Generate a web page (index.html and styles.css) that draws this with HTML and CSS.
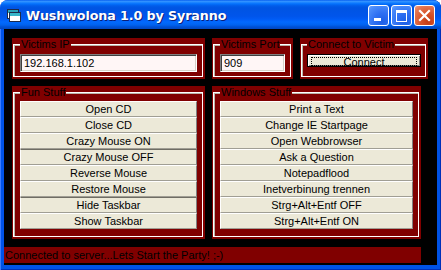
FILE: index.html
```html
<!DOCTYPE html>
<html>
<head>
<meta charset="utf-8">
<link rel="stylesheet" href="styles.css">
</head>
<body>
<div class="window">
  <div class="titlebar">
    <svg class="app-icon" width="14" height="13" viewBox="0 0 14 13">
      <rect x="0.5" y="0.5" width="11" height="9" fill="#fff" stroke="#1d2a4a"/>
      <rect x="1" y="1" width="10" height="3" fill="#2aa3b8"/>
      <rect x="2.5" y="3.5" width="11" height="9" fill="#fff" stroke="#1d2a4a"/>
      <rect x="3" y="4" width="10" height="3" fill="#37b6c9"/>
    </svg>
    <div class="title">Wushwolona 1.0 by Syranno</div>
    <div class="ctrls">
      <div class="cbtn cbtn-min"><span class="min-bar"></span></div>
      <div class="cbtn cbtn-max"><span class="max-box"></span></div>
      <div class="cbtn cbtn-close">
        <svg width="21" height="21" viewBox="0 0 21 21"><path d="M6 6 L15 15 M15 6 L6 15" stroke="#fff" stroke-width="2.2" stroke-linecap="square"/></svg>
      </div>
    </div>
  </div>
  <div class="client">
    <div class="row row-top">
      <div class="panel panel-ip">
        <fieldset class="group">
          <legend>Victims IP</legend>
          <div class="field">192.168.1.102</div>
        </fieldset>
      </div>
      <div class="panel panel-port">
        <fieldset class="group">
          <legend>Victims Port</legend>
          <div class="field">909</div>
        </fieldset>
      </div>
      <div class="panel panel-conn">
        <fieldset class="group group-conn">
          <legend>Connect to Victim</legend>
          <div class="connect"><span class="focus">Connect</span></div>
        </fieldset>
      </div>
    </div>
    <div class="row row-main">
      <div class="panel panel-fun">
        <fieldset class="group">
          <legend>Fun Stuff</legend>
          <div class="btns">
            <div class="btn">Open CD</div>
            <div class="btn">Close CD</div>
            <div class="btn">Crazy Mouse ON</div>
            <div class="btn btn-dark">Crazy Mouse OFF</div>
            <div class="btn">Reverse Mouse</div>
            <div class="btn">Restore Mouse</div>
            <div class="btn btn-dark">Hide Taskbar</div>
            <div class="btn">Show Taskbar</div>
          </div>
        </fieldset>
      </div>
      <div class="panel panel-win">
        <fieldset class="group">
          <legend>Windows Stuff</legend>
          <div class="btns">
            <div class="btn">Print a Text</div>
            <div class="btn">Change IE Startpage</div>
            <div class="btn">Open Webbrowser</div>
            <div class="btn">Ask a Question</div>
            <div class="btn">Notepadflood</div>
            <div class="btn">Inetverbinung trennen</div>
            <div class="btn">Strg+Alt+Entf OFF</div>
            <div class="btn">Strg+Alt+Entf ON</div>
          </div>
        </fieldset>
      </div>
    </div>
    <div class="status">Connected to server...Lets Start the Party! ;-)</div>
  </div>
</div>
</body>
</html>
```
FILE: styles.css
```css
html, body {
  margin: 0;
  padding: 0;
  background: #fff;
}
body {
  font-family: "Liberation Sans", Arial, sans-serif;
  font-size: 11px;
}
.window {
  width: 441px;
  height: 270px;
  background: #0052e6;
  border-radius: 8px 8px 0 0;
  box-shadow: inset 1px 0 0 #3a7bff, inset -1px 0 0 #0030b8, inset 0 -1px 0 #0030b8;
  display: flex;
  flex-direction: column;
  overflow: hidden;
}
.titlebar {
  height: 29px;
  flex: none;
  display: flex;
  align-items: center;
  padding: 0 6px 0 7px;
  border-radius: 8px 8px 0 0;
  background: linear-gradient(#0058ee 0%, #3593ff 4%, #288eff 7%, #127dff 10%, #036ffc 14%, #0262ee 18%, #0057e5 24%, #0054e3 30%, #0055eb 56%, #005bf5 66%, #026afe 76%, #0062ef 86%, #0052d6 92%, #0046c0 100%);
}
.app-icon {
  flex: none;
  margin-top: 1px;
}
.title {
  margin-left: 5px;
  color: #fff;
  font-family: "DejaVu Sans", "Liberation Sans", sans-serif;
  font-weight: bold;
  font-size: 12.7px;
  letter-spacing: -0.1px;
  text-shadow: 1px 1px 0 #0a1e78;
  flex: 1;
  padding-top: 1px;
}
.ctrls {
  display: flex;
  gap: 2px;
  margin-top: 1px;
}
.cbtn {
  width: 19px;
  height: 19px;
  border: 1px solid #fff;
  border-radius: 3px;
  position: relative;
  background: radial-gradient(circle at 70% 80%, #1c5fe6 0%, #2d6ff2 40%, #4a8bfa 80%, #6aa3ff 100%);
}
.cbtn-close {
  background: radial-gradient(circle at 70% 80%, #c43a12 0%, #d8542a 40%, #e67a57 80%, #f0a084 100%);
}
.cbtn-close svg {
  display: block;
  margin: -1px;
}
.min-bar {
  position: absolute;
  left: 5px;
  top: 12px;
  width: 7px;
  height: 3px;
  background: #fff;
}
.max-box {
  position: absolute;
  left: 4px;
  top: 4px;
  width: 9px;
  height: 8px;
  border: 1px solid #fff;
  border-top-width: 3px;
}
.client {
  flex: 1;
  margin: 0 4px 5px 4px;
  background: #000;
  padding: 9px 0 0 8px;
  display: flex;
  flex-direction: column;
}
.row {
  display: flex;
  gap: 7px;
}
.row-top {
  height: 41px;
}
.row-main {
  height: 153px;
  margin-top: 7px;
}
.panel {
  background: #800000;
  display: flex;
  padding: 0 2px 2px 1px;
}
.panel-ip { width: 190px; }
.panel-port { width: 78px; }
.panel-conn { width: 125px; }
.panel-fun { width: 190px; }
.panel-win { width: 206px; }
.group {
  flex: 1;
  margin: 0;
  padding: 0 5px 0 6px;
  min-width: 0;
  border: 1px solid #fff;
  box-shadow: inset 1px 1px 0 #b8b4a8;
}
.group-conn {
  padding: 0 4px 0 5px;
}
.group legend {
  padding: 0 1px;
  background: #800000;
  color: #000;
  font-size: 11px;
  line-height: 12px;
}
.field {
  margin-top: 4px;
  height: 18px;
  box-sizing: border-box;
  background: #fff6f6;
  border: 1px solid;
  border-color: #808080 #fff #fff #808080;
  box-shadow: inset 1px 1px 0 #404040, inset -1px -1px 0 #d4d0c8;
  padding: 0 3px;
  line-height: 16px;
  color: #000;
  font-size: 11px;
}
.connect {
  margin-top: 4px;
  height: 13px;
  box-sizing: border-box;
  border: 1px solid #000;
  background: #ece9d8;
  box-shadow: inset 1px 1px 0 #fff, inset -1px -1px 0 #808080;
  padding: 2px 3px;
  display: flex;
}
.focus {
  flex: 1;
  border: 1px dotted #000;
  text-align: center;
  line-height: 8px;
  height: 7px;
  padding-top: 0;
  color: #000;
  font-size: 11px;
  overflow: visible;
}
.btns {
  margin-top: 3px;
  display: flex;
  flex-direction: column;
}
.btn {
  height: 16px;
  box-sizing: border-box;
  background: #ece9d8;
  border: 1px solid;
  border-color: #fff #808080 #a09e94 #fff;
  text-align: center;
  line-height: 14px;
  color: #000;
  font-size: 11px;
}
.btn-dark {
  border-top-color: #6f6d64;
}
.status {
  margin-top: 8px;
  margin-left: -8px;
  width: 417px;
  height: 16px;
  background: #800000;
  color: #000;
  font-size: 11px;
  line-height: 16px;
  padding-left: 1px;
  box-sizing: border-box;
}
```
